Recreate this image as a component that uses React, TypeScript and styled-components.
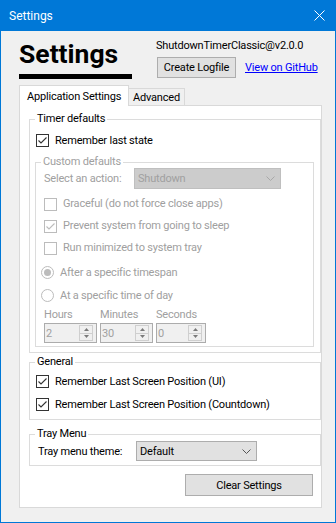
import styled, { createGlobalStyle } from 'styled-components'

const FONT = `Roboto, 'Liberation Sans', Arial, sans-serif`
const BLUE = '#0078d7'
const FACE = '#f0f0f0'
const PAGE = '#ffffff'
const FRAME = '#dcdcdc'
const DIM = '#a0a0a0'

const GlobalStyle = createGlobalStyle`
  * { box-sizing: border-box; }
  html, body { margin: 0; padding: 0; background: #ffffff; }
  body { font-family: ${FONT}; font-size: 11px; letter-spacing: -0.2px; color: #000; }
`

function Check({ label, checked, dim, h = 23, mt = 0, ml = 0 }: { label: string; checked?: boolean; dim?: boolean; h?: number; mt?: number; ml?: number }) {
    return (
        <CheckRow $h={h} $mt={mt} $ml={ml}>
            <Box $dim={dim}>
                {checked && (
                    <svg width="11" height="11" viewBox="0 0 11 11">
                        <polyline points="1.5,5.5 4,8 9.5,2.5" fill="none" stroke={dim ? '#bcbcbc' : '#333'} strokeWidth="1.1" />
                    </svg>
                )}
            </Box>
            <Text $dim={dim}>{label}</Text>
        </CheckRow>
    )
}

function Option({ label, selected }: { label: string; selected?: boolean }) {
    return (
        <CheckRow $h={23} $mt={0} $ml={-3}>
            <Radio>{selected && <Dot />}</Radio>
            <Text $dim>{label}</Text>
        </CheckRow>
    )
}

function Chevron({ dim }: { dim?: boolean }) {
    return (
        <svg width="9" height="5" viewBox="0 0 9 5">
            <polyline points="0.5,0.5 4.5,4.5 8.5,0.5" fill="none" stroke={dim ? '#a8a8a8' : '#555'} strokeWidth="1" />
        </svg>
    )
}

function Numeric({ label, value, w }: { label: string; value: string; w: number }) {
    return (
        <SpinCol>
            <Text $dim>{label}</Text>
            <SpinBox $w={w}>
                <SpinValue>{value}</SpinValue>
                <SpinButtons>
                    <SpinHalf>
                        <svg width="5" height="3" viewBox="0 0 5 3"><polygon points="0,3 2.5,0 5,3" fill="#7a7a7a" /></svg>
                    </SpinHalf>
                    <SpinHalf $bottom>
                        <svg width="5" height="3" viewBox="0 0 5 3"><polygon points="0,0 5,0 2.5,3" fill="#7a7a7a" /></svg>
                    </SpinHalf>
                </SpinButtons>
            </SpinBox>
        </SpinCol>
    )
}

export default function App() {
    return (
        <>
            <GlobalStyle />
            <Window>
                <TitleBar>
                    <span>Settings</span>
                    <svg width="11" height="11" viewBox="0 0 11 11">
                        <path d="M0.5 0.5 L10.5 10.5 M10.5 0.5 L0.5 10.5" stroke="#fff" strokeWidth="1" />
                    </svg>
                </TitleBar>
                <Body>
                    <Header>
                        <Brand>
                            <Heading>Settings</Heading>
                            <HeadingBar />
                        </Brand>
                        <Meta>
                            <Version>ShutdownTimerClassic@v2.0.0</Version>
                            <MetaRow>
                                <Button $w={79} $h={21}>Create Logfile</Button>
                                <Link href="#">View on GitHub</Link>
                            </MetaRow>
                        </Meta>
                    </Header>

                    <Tabs>
                        <Tab $active $w={110}>Application Settings</Tab>
                        <Tab $w={57}>Advanced</Tab>
                    </Tabs>

                    <TabPage>
                        <Group $pad="0 6px 5px 5px">
                            <Legend>Timer defaults</Legend>
                            <Check label="Remember last state" checked mt={2} ml={1} />
                            <Group $pad="0 6px 3px 8px" $mt={2}>
                                <Legend $dim $ml={-3}>Custom defaults</Legend>
                                <FieldRow $mt={-2}>
                                    <FieldLabel $w={90} $dim>Select an action:</FieldLabel>
                                    <Combo $w={147} $h={21} $dim>
                                        <span>Shutdown</span>
                                        <Chevron dim />
                                    </Combo>
                                </FieldRow>
                                <Check label="Graceful (do not force close apps)" dim h={22} mt={4} />
                                <Check label="Prevent system from going to sleep" checked dim h={22} />
                                <Check label="Run minimized to system tray" dim h={22} />
                                <RadioGroup>
                                    <Option label="After a specific timespan" selected />
                                    <Option label="At a specific time of day" />
                                </RadioGroup>
                                <SpinRow>
                                    <Numeric label="Hours" value="2" w={53} />
                                    <Numeric label="Minutes" value="30" w={53} />
                                    <Numeric label="Seconds" value="0" w={50} />
                                </SpinRow>
                            </Group>
                        </Group>

                        <Group $pad="0 6px 3px 5px" $mt={1}>
                            <Legend>General</Legend>
                            <Check label="Remember Last Screen Position (UI)" checked ml={1} />
                            <Check label="Remember Last Screen Position (Countdown)" checked ml={1} />
                        </Group>

                        <Group $pad="0 6px 4px 5px" $mt={6}>
                            <Legend>Tray Menu</Legend>
                            <FieldRow $mt={-1}>
                                <FieldLabel $w={98} $ml={3}>Tray menu theme:</FieldLabel>
                                <Combo $w={121} $h={20}>
                                    <span>Default</span>
                                    <Chevron />
                                </Combo>
                            </FieldRow>
                        </Group>

                        <Actions>
                            <Button $w={128} $h={22}>Clear Settings</Button>
                        </Actions>
                    </TabPage>
                </Body>
            </Window>
        </>
    )
}

const Window = styled.div`
    width: 336px;
    height: 523px;
    display: flex;
    flex-direction: column;
    background: ${FACE};
    border: 1px solid ${BLUE};
    border-top: none;
`

const TitleBar = styled.div`
    height: 31px;
    flex: none;
    display: flex;
    align-items: center;
    justify-content: space-between;
    padding: 0 10px 0 8px;
    background: ${BLUE};
    color: #ffffff;
    font-size: 12px;
    letter-spacing: 0;
`

const Body = styled.div`
    flex: 1;
    padding-left: 18px;
`

const Header = styled.div`
    display: flex;
    height: 48px;
`

const Brand = styled.div`
    width: 113px;
    padding-top: 10px;
`

const Heading = styled.h1`
    margin: 0;
    font-size: 26.5px;
    line-height: 26px;
    font-weight: 700;
    letter-spacing: 0;
`

const HeadingBar = styled.div`
    height: 5px;
    margin-top: 7px;
    background: #000000;
`

const Meta = styled.div`
    margin-left: 24px;
    padding-top: 8px;
`

const Version = styled.div`
    line-height: 14px;
`

const MetaRow = styled.div`
    display: flex;
    align-items: center;
    margin-top: 4px;
    margin-left: 1px;
`

const Button = styled.button<{ $w: number; $h: number }>`
    width: ${({ $w }) => $w}px;
    height: ${({ $h }) => $h}px;
    padding: 0;
    border: 1px solid #adadad;
    background: #e1e1e1;
    font-family: ${FONT};
    font-size: 11px;
    letter-spacing: -0.2px;
    color: #000;
`

const Link = styled.a`
    margin-left: 9px;
    color: #0000ff;
    text-decoration: underline;
`

const Tabs = styled.div`
    display: flex;
    align-items: flex-end;
    height: 20px;
    margin-top: 6px;
`

const Tab = styled.div<{ $active?: boolean; $w: number }>`
    position: relative;
    z-index: ${({ $active }) => ($active ? 2 : 1)};
    width: ${({ $w }) => $w}px;
    height: ${({ $active }) => ($active ? 21 : 17)}px;
    margin-bottom: ${({ $active }) => ($active ? -1 : 0)}px;
    margin-left: ${({ $active }) => ($active ? 0 : -1)}px;
    display: flex;
    align-items: center;
    padding-left: ${({ $active }) => ($active ? 7 : 4)}px;
    background: ${({ $active }) => ($active ? PAGE : FACE)};
    border: 1px solid #d9d9d9;
    border-bottom: none;
`

const TabPage = styled.div`
    width: 303px;
    height: 403px;
    padding: 5px 0 0 9px;
    display: flex;
    flex-direction: column;
    background: ${PAGE};
    border: 1px solid #d9d9d9;
`

const Group = styled.fieldset<{ $pad: string; $mt?: number }>`
    margin: ${({ $mt }) => $mt ?? 0}px 0 0 0;
    padding: ${({ $pad }) => $pad};
    min-width: 0;
    border: 1px solid ${FRAME};
    display: flex;
    flex-direction: column;
`

const Legend = styled.legend<{ $dim?: boolean; $ml?: number }>`
    padding: 0 2px;
    margin-left: ${({ $ml }) => $ml ?? 0}px;
    line-height: 16px;
    color: ${({ $dim }) => ($dim ? DIM : '#000')};
`

const CheckRow = styled.div<{ $h: number; $mt: number; $ml: number }>`
    display: flex;
    align-items: center;
    gap: 6px;
    height: ${({ $h }) => $h}px;
    margin-top: ${({ $mt }) => $mt}px;
    margin-left: ${({ $ml }) => $ml}px;
`

const Box = styled.span<{ $dim?: boolean }>`
    flex: none;
    width: 13px;
    height: 13px;
    display: flex;
    border: 1px solid ${({ $dim }) => ($dim ? '#bcbcbc' : '#333333')};
    background: ${({ $dim }) => ($dim ? 'transparent' : '#ffffff')};
`

const Radio = styled.span`
    flex: none;
    width: 13px;
    height: 13px;
    display: flex;
    align-items: center;
    justify-content: center;
    border: 1px solid #bcbcbc;
    border-radius: 50%;
`

const Dot = styled.span`
    width: 7px;
    height: 7px;
    border-radius: 50%;
    background: #bcbcbc;
`

const Text = styled.span<{ $dim?: boolean }>`
    line-height: 16px;
    white-space: nowrap;
    color: ${({ $dim }) => ($dim ? DIM : '#000')};
`

const RadioGroup = styled.div`
    margin-top: 2px;
`

const FieldRow = styled.div<{ $mt?: number }>`
    display: flex;
    align-items: center;
    margin-top: ${({ $mt }) => $mt ?? 0}px;
`

const FieldLabel = styled.span<{ $w: number; $dim?: boolean; $ml?: number }>`
    width: ${({ $w }) => $w}px;
    margin-left: ${({ $ml }) => $ml ?? 0}px;
    color: ${({ $dim }) => ($dim ? DIM : '#000')};
`

const Combo = styled.div<{ $w: number; $h: number; $dim?: boolean }>`
    width: ${({ $w }) => $w}px;
    height: ${({ $h }) => $h}px;
    display: flex;
    align-items: center;
    justify-content: space-between;
    padding: 0 5px 0 3px;
    border: 1px solid ${({ $dim }) => ($dim ? '#bfbfbf' : '#adadad')};
    background: ${({ $dim }) => ($dim ? '#cccccc' : '#e1e1e1')};
    color: ${({ $dim }) => ($dim ? DIM : '#000')};
`

const SpinRow = styled.div`
    display: flex;
    gap: 3px;
`

const SpinCol = styled.div`
    display: flex;
    flex-direction: column;
`

const SpinBox = styled.div<{ $w: number }>`
    width: ${({ $w }) => $w}px;
    height: 20px;
    display: flex;
    align-items: center;
    justify-content: space-between;
    padding: 0 3px 0 1px;
    border: 1px solid #acacac;
    background: ${FACE};
`

const SpinValue = styled.span`
    color: ${DIM};
`

const SpinButtons = styled.div`
    width: 14px;
    height: 16px;
    display: flex;
    flex-direction: column;
    border: 1px solid #cfcfcf;
`

const SpinHalf = styled.div<{ $bottom?: boolean }>`
    flex: 1;
    display: flex;
    align-items: center;
    justify-content: center;
    border-top: ${({ $bottom }) => ($bottom ? '1px solid #cfcfcf' : 'none')};
`

const Actions = styled.div`
    width: 284px;
    display: flex;
    justify-content: flex-end;
    margin-top: 8px;
`
